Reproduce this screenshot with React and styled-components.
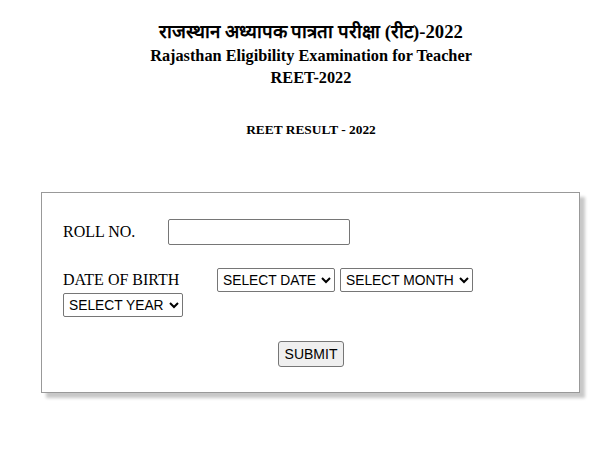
import React from "react";
import styled, { createGlobalStyle } from "styled-components";

const GlobalStyle = createGlobalStyle`
  body {
    margin: 0;
    background: #fff;
    font-family: "Liberation Serif", "Times New Roman", serif;
    color: #000;
  }
`;

const Page = styled.div`
  width: 600px;
  height: 450px;
  padding: 19px 0 0 22px;
  box-sizing: border-box;
`;

const Header = styled.div`
  text-align: center;
  font-weight: bold;
`;

const HindiTitle = styled.div`
  font-size: 18.7px;
  line-height: 26px;
`;

const SubTitle = styled.div`
  font-size: 16.3px;
  line-height: 22px;
`;

const ResultTitle = styled.div`
  margin-top: 33px;
  text-align: center;
  font-weight: bold;
  font-size: 13.4px;
`;

const Panel = styled.div`
  margin: 54px 0 0 19px;
  width: 539px;
  box-sizing: border-box;
  border: 1px solid #999;
  box-shadow: 5px 5px 3px #c8c8c8;
  padding: 26px 20px 25px 21px;
`;

const Row = styled.div`
  display: flex;
  flex-wrap: wrap;
  align-items: center;
  gap: 1px 5px;
  margin-bottom: ${(p) => p.$gap || 0}px;
`;

const Label = styled.label`
  width: ${(p) => p.$width}px;
  font-size: 16px;
`;

const TextInput = styled.input`
  width: 182px;
  height: 26px;
  box-sizing: border-box;
  border: 1px solid #767676;
  border-radius: 2px;
  margin-left: -5px;
`;

const Select = styled.select`
  height: 24px;
  font-family: "Liberation Sans", Arial, sans-serif;
  font-size: 13.8px;
  color: #000;
  border: 1px solid #767676;
  border-radius: 2px;
  background: #fff;
  padding: 0 1px;
`;

const Actions = styled.div`
  text-align: center;
`;

const SubmitBtn = styled.button`
  height: 26px;
  padding: 0 6px;
  font-family: "Liberation Sans", Arial, sans-serif;
  font-size: 14px;
  color: #000;
  background: #efefef;
  border: 1px solid #767676;
  border-radius: 3px;
`;

const App = () => {
  return (
    <Page>
      <GlobalStyle />
      <Header>
        <HindiTitle>राजस्थान अध्यापक पात्रता परीक्षा (रीट)-2022</HindiTitle>
        <SubTitle>Rajasthan Eligibility Examination for Teacher</SubTitle>
        <SubTitle>REET-2022</SubTitle>
      </Header>
      <ResultTitle>REET RESULT - 2022</ResultTitle>
      <Panel>
        <Row $gap={23}>
          <Label $width={105}>ROLL NO.</Label>
          <TextInput type="text" />
        </Row>
        <Row $gap={24}>
          <Label $width={149}>DATE OF BIRTH</Label>
          <Select defaultValue="">
            <option value="">SELECT DATE</option>
          </Select>
          <Select defaultValue="">
            <option value="">SELECT MONTH</option>
          </Select>
          <Select defaultValue="">
            <option value="">SELECT YEAR</option>
          </Select>
        </Row>
        <Actions>
          <SubmitBtn type="button">SUBMIT</SubmitBtn>
        </Actions>
      </Panel>
    </Page>
  );
};

export default App;
